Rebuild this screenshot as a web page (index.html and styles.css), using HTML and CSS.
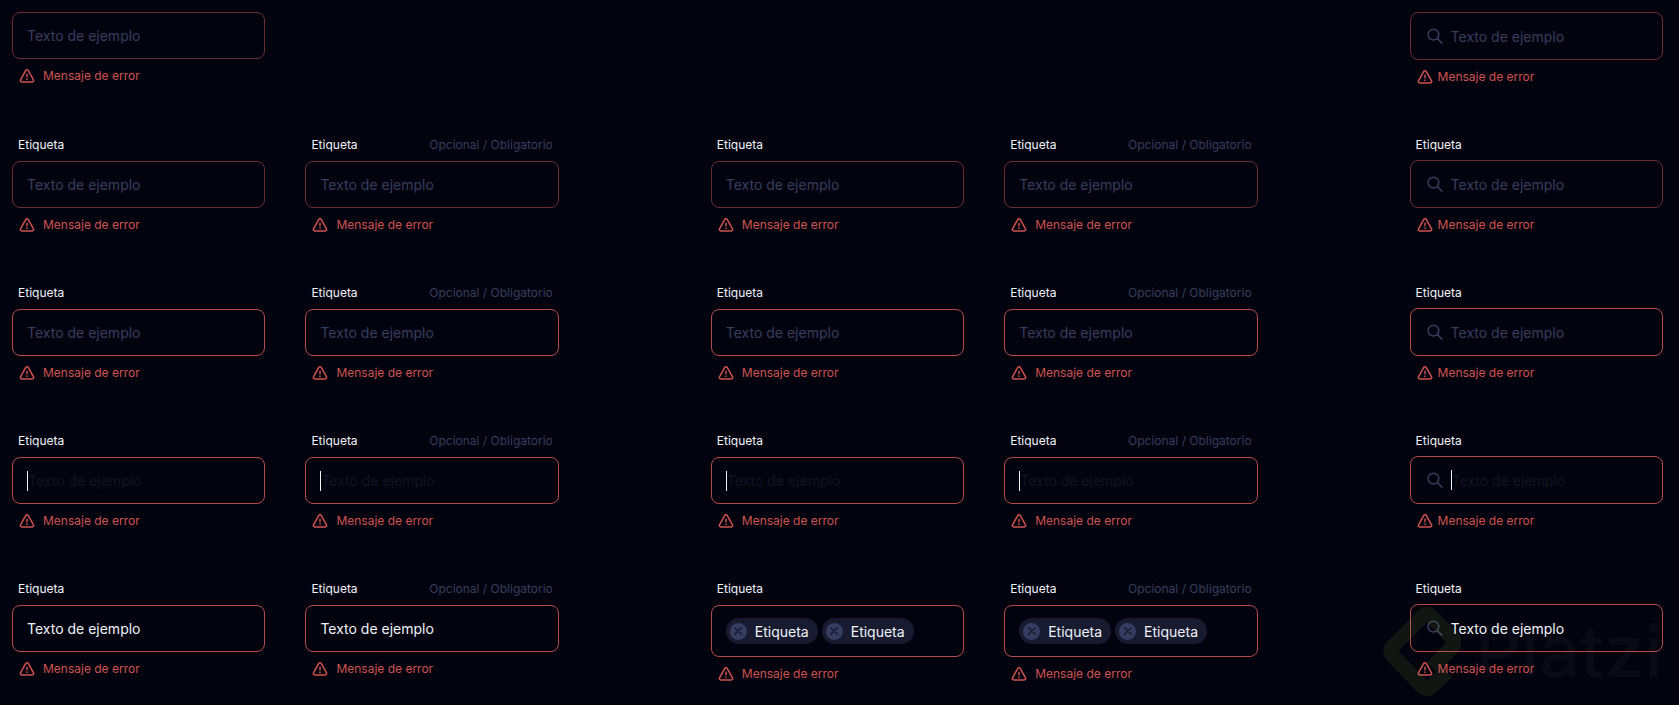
FILE: index.html
```
<!DOCTYPE html>
<html lang="es">
<head>
  <meta charset="UTF-8">
  <meta name="viewport" content="width=device-width, initial-scale=1.0">
  <title>Inputs - Estados de error</title>
  <link rel="stylesheet" href="styles.css">
</head>
<body>
  <!-- Shared icons -->
  <svg class="sprite" aria-hidden="true">
    <symbol id="icon-alert" viewBox="0 0 16 16">
      <path d="M6.8 2.4 1.5 11.8a1.4 1.4 0 0 0 1.2 2.1h10.6a1.4 1.4 0 0 0 1.2-2.1L9.2 2.4a1.4 1.4 0 0 0-2.4 0z" />
      <path d="M8 6.2v2.6M8 11v.4" />
    </symbol>
    <symbol id="icon-search" viewBox="0 0 16 16">
      <circle cx="6.4" cy="6.6" r="5.4" />
      <path d="M10.3 10.5l4.6 4.6" />
    </symbol>
    <symbol id="icon-close" viewBox="0 0 8 8">
      <path d="M.7.7l6.6 6.6M7.3.7L.7 7.3" />
    </symbol>
  </svg>

  <main class="board">
    <!-- Row 1: no label -->
    <div class="form-group col-1">
      <div class="field"><input type="text" aria-label="Texto" placeholder="Texto de ejemplo"></div>
      <p class="error"><svg><use href="#icon-alert"/></svg>Mensaje de error</p>
    </div>
    <div class="form-group search col-5">
      <div class="field"><svg><use href="#icon-search"/></svg><input type="text" aria-label="Buscar" placeholder="Texto de ejemplo"></div>
      <p class="error"><svg><use href="#icon-alert"/></svg>Mensaje de error</p>
    </div>

    <!-- Row 2: default -->
    <div class="form-group col-1">
      <div class="label-row"><label for="text-2a">Etiqueta</label></div>
      <div class="field"><input type="text" id="text-2a" placeholder="Texto de ejemplo"></div>
      <p class="error"><svg><use href="#icon-alert"/></svg>Mensaje de error</p>
    </div>
    <div class="form-group col-2">
      <div class="label-row"><label for="text-2b">Etiqueta</label><span class="hint">Opcional / Obligatorio</span></div>
      <div class="field"><input type="text" id="text-2b" placeholder="Texto de ejemplo"></div>
      <p class="error"><svg><use href="#icon-alert"/></svg>Mensaje de error</p>
    </div>
    <div class="form-group col-3">
      <div class="label-row"><label for="tags-2a">Etiqueta</label></div>
      <div class="field"><input type="text" id="tags-2a" placeholder="Texto de ejemplo"></div>
      <p class="error"><svg><use href="#icon-alert"/></svg>Mensaje de error</p>
    </div>
    <div class="form-group col-4">
      <div class="label-row"><label for="tags-2b">Etiqueta</label><span class="hint">Opcional / Obligatorio</span></div>
      <div class="field"><input type="text" id="tags-2b" placeholder="Texto de ejemplo"></div>
      <p class="error"><svg><use href="#icon-alert"/></svg>Mensaje de error</p>
    </div>
    <div class="form-group search col-5">
      <div class="label-row"><label for="search-2">Etiqueta</label></div>
      <div class="field"><svg><use href="#icon-search"/></svg><input type="text" id="search-2" placeholder="Texto de ejemplo"></div>
      <p class="error"><svg><use href="#icon-alert"/></svg>Mensaje de error</p>
    </div>

    <!-- Row 3: hover -->
    <div class="form-group col-1">
      <div class="label-row"><label for="text-3a">Etiqueta</label></div>
      <div class="field active"><input type="text" id="text-3a" placeholder="Texto de ejemplo"></div>
      <p class="error"><svg><use href="#icon-alert"/></svg>Mensaje de error</p>
    </div>
    <div class="form-group col-2">
      <div class="label-row"><label for="text-3b">Etiqueta</label><span class="hint">Opcional / Obligatorio</span></div>
      <div class="field active"><input type="text" id="text-3b" placeholder="Texto de ejemplo"></div>
      <p class="error"><svg><use href="#icon-alert"/></svg>Mensaje de error</p>
    </div>
    <div class="form-group col-3">
      <div class="label-row"><label for="tags-3a">Etiqueta</label></div>
      <div class="field active"><input type="text" id="tags-3a" placeholder="Texto de ejemplo"></div>
      <p class="error"><svg><use href="#icon-alert"/></svg>Mensaje de error</p>
    </div>
    <div class="form-group col-4">
      <div class="label-row"><label for="tags-3b">Etiqueta</label><span class="hint">Opcional / Obligatorio</span></div>
      <div class="field active"><input type="text" id="tags-3b" placeholder="Texto de ejemplo"></div>
      <p class="error"><svg><use href="#icon-alert"/></svg>Mensaje de error</p>
    </div>
    <div class="form-group search col-5">
      <div class="label-row"><label for="search-3">Etiqueta</label></div>
      <div class="field active"><svg><use href="#icon-search"/></svg><input type="text" id="search-3" placeholder="Texto de ejemplo"></div>
      <p class="error"><svg><use href="#icon-alert"/></svg>Mensaje de error</p>
    </div>

    <!-- Row 4: focus -->
    <div class="form-group col-1">
      <div class="label-row"><label for="text-4a">Etiqueta</label></div>
      <div class="field active focus"><span class="caret"></span><input type="text" id="text-4a" placeholder="Texto de ejemplo"></div>
      <p class="error"><svg><use href="#icon-alert"/></svg>Mensaje de error</p>
    </div>
    <div class="form-group col-2">
      <div class="label-row"><label for="text-4b">Etiqueta</label><span class="hint">Opcional / Obligatorio</span></div>
      <div class="field active focus"><span class="caret"></span><input type="text" id="text-4b" placeholder="Texto de ejemplo"></div>
      <p class="error"><svg><use href="#icon-alert"/></svg>Mensaje de error</p>
    </div>
    <div class="form-group col-3">
      <div class="label-row"><label for="tags-4a">Etiqueta</label></div>
      <div class="field active focus"><span class="caret"></span><input type="text" id="tags-4a" placeholder="Texto de ejemplo"></div>
      <p class="error"><svg><use href="#icon-alert"/></svg>Mensaje de error</p>
    </div>
    <div class="form-group col-4">
      <div class="label-row"><label for="tags-4b">Etiqueta</label><span class="hint">Opcional / Obligatorio</span></div>
      <div class="field active focus"><span class="caret"></span><input type="text" id="tags-4b" placeholder="Texto de ejemplo"></div>
      <p class="error"><svg><use href="#icon-alert"/></svg>Mensaje de error</p>
    </div>
    <div class="form-group search col-5">
      <div class="label-row"><label for="search-4">Etiqueta</label></div>
      <div class="field active focus"><svg><use href="#icon-search"/></svg><span class="caret"></span><input type="text" id="search-4" placeholder="Texto de ejemplo"></div>
      <p class="error"><svg><use href="#icon-alert"/></svg>Mensaje de error</p>
    </div>

    <!-- Row 5: filled -->
    <div class="form-group col-1">
      <div class="label-row"><label for="text-5a">Etiqueta</label></div>
      <div class="field active"><input type="text" id="text-5a" value="Texto de ejemplo"></div>
      <p class="error"><svg><use href="#icon-alert"/></svg>Mensaje de error</p>
    </div>
    <div class="form-group col-2">
      <div class="label-row"><label for="text-5b">Etiqueta</label><span class="hint">Opcional / Obligatorio</span></div>
      <div class="field active"><input type="text" id="text-5b" value="Texto de ejemplo"></div>
      <p class="error"><svg><use href="#icon-alert"/></svg>Mensaje de error</p>
    </div>
    <div class="form-group col-3">
      <div class="label-row"><label for="tags-5a">Etiqueta</label></div>
      <div class="field active tags">
        <span class="tag"><button type="button" aria-label="Quitar"><svg><use href="#icon-close"/></svg></button>Etiqueta</span>
        <span class="tag"><button type="button" aria-label="Quitar"><svg><use href="#icon-close"/></svg></button>Etiqueta</span>
        <input type="text" id="tags-5a">
      </div>
      <p class="error"><svg><use href="#icon-alert"/></svg>Mensaje de error</p>
    </div>
    <div class="form-group col-4">
      <div class="label-row"><label for="tags-5b">Etiqueta</label><span class="hint">Opcional / Obligatorio</span></div>
      <div class="field active tags">
        <span class="tag"><button type="button" aria-label="Quitar"><svg><use href="#icon-close"/></svg></button>Etiqueta</span>
        <span class="tag"><button type="button" aria-label="Quitar"><svg><use href="#icon-close"/></svg></button>Etiqueta</span>
        <input type="text" id="tags-5b">
      </div>
      <p class="error"><svg><use href="#icon-alert"/></svg>Mensaje de error</p>
    </div>
    <div class="form-group search col-5">
      <div class="label-row"><label for="search-5">Etiqueta</label></div>
      <div class="field active"><svg><use href="#icon-search"/></svg><input type="text" id="search-5" value="Texto de ejemplo"></div>
      <p class="error"><svg><use href="#icon-alert"/></svg>Mensaje de error</p>
    </div>
  </main>

  <div class="watermark">
    <svg viewBox="0 0 78 92">
      <path d="M49 63L70 41Q73 38 70 34L49 12Q44 7 39 12L10 41Q6 46 10 51L39 81Q44 86 49 81L64 67" />
    </svg>
    <span>Platzi</span>
  </div>
</body>
</html>
```
FILE: styles.css
```
* {
  box-sizing: border-box;
  margin: 0;
  padding: 0;
}
body {
  font-family: Inter, "Liberation Sans", sans-serif;
  font-size: 14px;
  background-color: #02030f;
  color: #eff3f8;
  min-height: 100vh;
}
svg {
  fill: none;
  stroke: currentColor;
  stroke-linecap: round;
  stroke-linejoin: round;
  flex-shrink: 0;
}
.sprite {
  display: none;
}

/* Two text columns, two tag columns, one search column */
.board {
  display: grid;
  grid-template-columns: repeat(2, minmax(0, 1fr)) 72px repeat(2, minmax(0, 1fr)) 72px minmax(0, 1fr);
  gap: 52px 40px;
  align-items: start;
  padding: 12px 16px 12px 12px;
}
.col-1 {
  grid-column: 1;
}
.col-2 {
  grid-column: 2;
}
.col-3 {
  grid-column: 4;
}
.col-4 {
  grid-column: 5;
}
.col-5 {
  grid-column: 7;
}

.label-row {
  display: flex;
  justify-content: space-between;
  padding: 0 6px;
  margin-bottom: 8px;
  font-size: 12px;
  line-height: 16px;
}
.hint {
  color: #393d5e;
}

.field {
  display: flex;
  align-items: center;
  height: 47px;
  padding: 0 14px;
  border: 1px solid #692c34;
  border-radius: 8px;
}
.field.active {
  border-color: #b44b49;
}
.field input {
  flex: 1;
  min-width: 0;
  height: 100%;
  background: none;
  border: none;
  outline: none;
  color: inherit;
  font: inherit;
}
.field input::placeholder {
  color: #393d5e;
  opacity: 1;
}
.field.focus input::placeholder {
  color: #121424;
}
.caret {
  width: 1px;
  height: 20px;
  background: #eff3f8;
}

.search .label-row {
  margin-bottom: 7px;
}
.search .field {
  height: 48px;
  padding: 0 16px;
}
.search .field > svg {
  width: 16px;
  height: 16px;
  margin-right: 8px;
  color: #393d5e;
  stroke-width: 1.5;
}

.error {
  display: flex;
  align-items: center;
  gap: 8px;
  padding-left: 7px;
  margin-top: 9px;
  color: #cd534f;
  font-size: 12px;
  line-height: 16px;
}
.error svg {
  width: 16px;
  height: 16px;
  stroke-width: 1.5;
}
.search .error {
  gap: 5px;
}

.field.tags {
  height: auto;
  gap: 4px;
  padding: 12px 14px;
}
.tag {
  display: flex;
  align-items: center;
  gap: 8px;
  height: 26px;
  padding: 0 9px 0 4px;
  border-radius: 13px;
  background: #181b30;
}
.tag button {
  display: flex;
  align-items: center;
  justify-content: center;
  width: 17px;
  height: 17px;
  border: none;
  border-radius: 50%;
  background: #373c63;
  color: #15182a;
  cursor: pointer;
}
.tag svg {
  width: 8px;
  height: 8px;
  stroke-width: 1.4;
}

.watermark {
  position: fixed;
  right: 16px;
  bottom: 8px;
  display: flex;
  align-items: center;
  gap: 14px;
  color: rgba(255, 255, 255, 0.03);
  font-size: 72px;
  font-weight: 500;
  line-height: 92px;
  pointer-events: none;
}
.watermark svg {
  width: 78px;
  height: 92px;
  stroke: rgba(160, 200, 60, 0.1);
  stroke-width: 15;
  stroke-linecap: butt;
}
```
